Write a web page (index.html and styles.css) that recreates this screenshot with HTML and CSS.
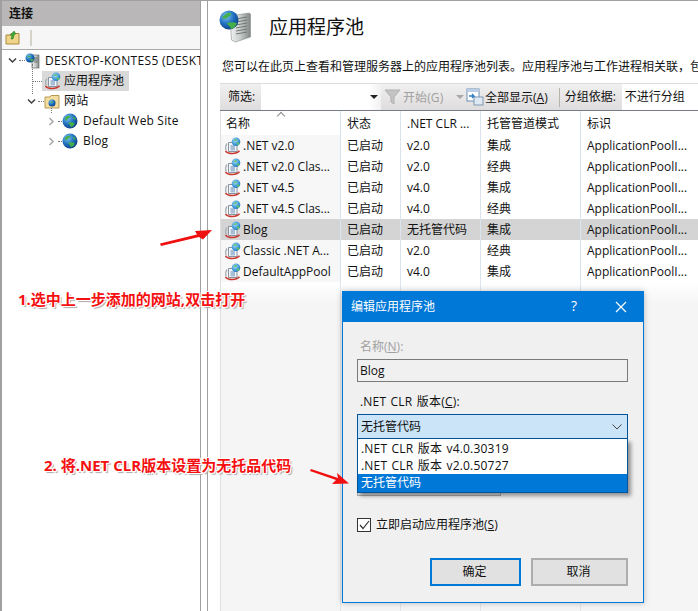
FILE: index.html
```html
<!DOCTYPE html>
<html lang="zh-CN">
<head>
<meta charset="utf-8">
<title>应用程序池</title>
<link rel="stylesheet" href="styles.css">
</head>
<body>
<svg class="defs" width="0" height="0" aria-hidden="true">
  <defs>
    <radialGradient id="globe" cx="35%" cy="30%" r="75%">
      <stop offset="0" stop-color="#7fc4ee"/>
      <stop offset=".55" stop-color="#1f6fc0"/>
      <stop offset="1" stop-color="#0d3f80"/>
    </radialGradient>
    <radialGradient id="globe-light" cx="40%" cy="35%" r="75%">
      <stop offset="0" stop-color="#a8dcf5"/>
      <stop offset=".6" stop-color="#3d97d8"/>
      <stop offset="1" stop-color="#1f6fb5"/>
    </radialGradient>
    <linearGradient id="tower" x1="0" x2="1" y1="0" y2="0">
      <stop offset="0" stop-color="#f2f4f3"/>
      <stop offset=".5" stop-color="#c9cdcb"/>
      <stop offset="1" stop-color="#7f8683"/>
    </linearGradient>
    <symbol id="i-globe" viewBox="0 0 16 16">
      <circle cx="8" cy="8" r="7.5" fill="url(#globe)"/>
      <path d="M3 5c1.500-2 3.500-2.500 5-2 1 .5 0 1.500-1 2-.5 1-2 1-2.500 2.500C3.500 8 3 6.500 3 5zM7 9.500c1.500-.5 4-.5 5.500.5.500 1-1 3.500-3 4-1.500 0-1-2-2-2.500S6 10 7 9.500zM11 3.500c1 0 2.500 1.500 3 3-1 .5-2.500-.5-3-1.500z" fill="#45b04a"/>
    </symbol>
    <symbol id="i-pool" viewBox="0 0 18 18">
      <path d="M3 6.500C1.500 8.500 1.300 11 2 13.500" fill="none" stroke="#a9b0b8" stroke-width="1.300"/>
      <path d="M4.500 5.500h8.500v9H4.500z" fill="#f4f6f8" stroke="#8793a0"/>
      <path d="M6.500 8.500h4.500v1H6.500zM6.500 10.500h4.500v1H6.500zM6.500 12.500h4.500v.8H6.500z" fill="#5a86b4"/>
      <circle cx="12" cy="4.800" r="4.300" fill="url(#globe-light)"/>
      <path d="M9.500 3.500c1-1.300 2.500-1.500 3.500-1 0 1-2 2-3.500 1zM12.500 5.500c.8 0 2.500 0 3 .4 0 1-1 2.200-2 2.200z" fill="#5fc062"/>
      <path d="M1.500 14c2.500 3.400 11 3.400 14 -.2" fill="none" stroke="#c8392f" stroke-width="1.500"/>
    </symbol>
  </defs>
</svg>

<div class="window">
  <aside class="conn">
    <div class="conn-head">连接</div>
    <div class="conn-tools">
      <svg class="tool-icon" width="15" height="15" viewBox="0 0 15 15">
        <path d="M1 5h4l1-1.500h8v10.500H1z" fill="#f0d48a" stroke="#a98b3e"/>
        <path d="M6 9l1-4-2 .5L9 1l2 3-1.500 0L8 9z" fill="#3fa535" stroke="#2d7d27" stroke-width=".5"/>
      </svg>
      <span class="tool-sep"></span>
    </div>
    <ul class="tree">
      <li class="node lvl0">
        <svg class="chev" viewBox="0 0 9 9"><path d="M1 2.500l3.500 3.500L8 2.500" /></svg>
        <span class="dots short"></span>
        <svg class="node-icon" width="16" height="16" viewBox="0 0 16 16">
          <rect x="7" y="2" width="7" height="13" fill="url(#tower)" stroke="#67706c" stroke-width=".7"/>
          <path d="M8.500 5h4M8.500 7h4M8.500 9h4" stroke="#4c5753" stroke-width=".8"/>
          <circle cx="5" cy="5" r="4.500" fill="url(#globe)"/>
          <path d="M2.500 3.500c1-1 3-1.500 3.500-.5 0 1-2 2-3.500.5zM5 6c1 0 3 0 3.500.5 0 1-1.500 2-2.500 2z" fill="#45b04a"/>
        </svg>
        <span class="node-label server">DESKTOP-KONTES5 (DESKTOP-KONTES5\Administrator)</span>
      </li>
      <li class="node lvl1">
        <span class="dots long"></span>
        <span class="sel">
          <svg class="node-icon" width="18" height="18"><use href="#i-pool"/></svg>
          <span class="node-label">应用程序池</span>
        </span>
      </li>
      <li class="node lvl1b">
        <svg class="chev" viewBox="0 0 9 9"><path d="M1 2.500l3.500 3.500L8 2.500" /></svg>
        <span class="dots short"></span>
        <svg class="node-icon" width="16" height="15" viewBox="0 0 16 15">
          <path d="M1 3h5l1-1.500h8V14H1z" fill="#f3dc9f" stroke="#b99a52"/>
          <circle cx="8" cy="9" r="3.500" fill="url(#globe)"/>
          <path d="M6 8c1-1 2.500-1 3 0-1 1-2 1-3 0z" fill="#45b04a"/>
        </svg>
        <span class="node-label">网站</span>
      </li>
      <li class="node lvl2 first">
        <svg class="chev closed" viewBox="0 0 9 9"><path d="M2.500 1L6 4.500 2.500 8" /></svg>
        <span class="dots short"></span>
        <svg class="node-icon" width="16" height="16"><use href="#i-globe"/></svg>
        <span class="node-label">Default Web Site</span>
      </li>
      <li class="node lvl2">
        <svg class="chev closed" viewBox="0 0 9 9"><path d="M2.500 1L6 4.500 2.500 8" /></svg>
        <span class="dots short"></span>
        <svg class="node-icon" width="16" height="16"><use href="#i-globe"/></svg>
        <span class="node-label">Blog</span>
      </li>
    </ul>
  </aside>

  <main class="main">
    <header class="page-head">
      <svg class="head-icon" width="33" height="33" viewBox="0 0 33 33">
        <path d="M11 6l19-3 1.500 1v23l-15 5-4-2z" fill="url(#tower)" stroke="#8a908d" stroke-width=".6"/>
        <path d="M17 9l11-2M17 12l11-2M17 15l11-2M17 18l11-2M17 21l11-2M17 24l11-2" stroke="#6f7774" stroke-width="1"/>
        <circle cx="10" cy="10" r="9.500" fill="url(#globe)"/>
        <path d="M3 8c2-4 7-6 9-5 1 1-1 3-3 4-1 2-4 2-6 1zM8 13c3-1 7-1 10 0-1 3-4 6-6 6-1-2-1-3-3-4z" fill="#45b04a"/>
      </svg>
      <h1>应用程序池</h1>
    </header>
    <p class="desc">您可以在此页上查看和管理服务器上的应用程序池列表。应用程序池与工作进程相关联，包含一个或多个应用程序。</p>
    <div class="filter">
      <span class="filter-label">筛选:</span>
      <span class="filter-input"><span class="caret"></span></span>
      <span class="fbtn disabled">
        <svg width="18" height="16" viewBox="0 0 18 16"><path d="M1 1h15l-6 7v7l-3-2V8z" fill="#c4c4c4" stroke="#b0b0b0"/></svg>
        <span>开始(G)</span>
      </span>
      <span class="caret small"></span>
      <span class="fbtn">
        <svg width="18" height="18" viewBox="0 0 18 18"><rect x="1" y="1" width="12" height="12" fill="#fff" stroke="#6d8fb3"/><rect x="1" y="1" width="12" height="3" fill="#b8cfe6"/><rect x="8" y="9" width="9" height="8" fill="#dfe9f3" stroke="#7f98b3"/><path d="M3 8h5l-2-2M8 8l-2 2" fill="none" stroke="#2f7fc1" stroke-width="1.300"/></svg>
        <span>全部显示(<u>A</u>)</span>
      </span>
      <span class="filter-sep"></span>
      <span class="group-label">分组依据:</span>
      <span class="group-value">不进行分组</span>
    </div>
    <div class="list">
      <div class="row head">
        <span class="c1">名称<i class="sort"></i></span><span class="c2">状态</span><span class="c3">.NET CLR ...</span><span class="c4">托管管道模式</span><span class="c5">标识</span>
      </div>
      <div class="row"><span class="c1"><svg width="18" height="18"><use href="#i-pool"/></svg>.NET v2.0</span><span class="c2">已启动</span><span class="c3">v2.0</span><span class="c4">集成</span><span class="c5">ApplicationPoolI...</span></div>
      <div class="row"><span class="c1"><svg width="18" height="18"><use href="#i-pool"/></svg>.NET v2.0 Clas...</span><span class="c2">已启动</span><span class="c3">v2.0</span><span class="c4">经典</span><span class="c5">ApplicationPoolI...</span></div>
      <div class="row"><span class="c1"><svg width="18" height="18"><use href="#i-pool"/></svg>.NET v4.5</span><span class="c2">已启动</span><span class="c3">v4.0</span><span class="c4">集成</span><span class="c5">ApplicationPoolI...</span></div>
      <div class="row"><span class="c1"><svg width="18" height="18"><use href="#i-pool"/></svg>.NET v4.5 Clas...</span><span class="c2">已启动</span><span class="c3">v4.0</span><span class="c4">经典</span><span class="c5">ApplicationPoolI...</span></div>
      <div class="row selected"><span class="c1"><svg width="18" height="18"><use href="#i-pool"/></svg>Blog</span><span class="c2">已启动</span><span class="c3">无托管代码</span><span class="c4">集成</span><span class="c5">ApplicationPoolI...</span></div>
      <div class="row"><span class="c1"><svg width="18" height="18"><use href="#i-pool"/></svg>Classic .NET A...</span><span class="c2">已启动</span><span class="c3">v2.0</span><span class="c4">经典</span><span class="c5">ApplicationPoolI...</span></div>
      <div class="row"><span class="c1"><svg width="18" height="18"><use href="#i-pool"/></svg>DefaultAppPool</span><span class="c2">已启动</span><span class="c3">v4.0</span><span class="c4">集成</span><span class="c5">ApplicationPoolI...</span></div>
      <div class="list-rest">
        <span class="c1"></span><span class="c2"></span><span class="c3"></span><span class="c4"></span><span class="c5"></span>
      </div>
    </div>
  </main>
</div>

<section class="dialog">
  <div class="dlg-title">
    <span class="dlg-caption">编辑应用程序池</span>
    <span class="dlg-help">?</span>
    <svg class="dlg-close" width="12" height="12" viewBox="0 0 12 12"><path d="M1 1l10 10M11 1L1 11"/></svg>
  </div>
  <div class="dlg-body">
    <div class="lbl muted">名称(<u>N</u>):</div>
    <div class="readonly">Blog</div>
    <div class="lbl clr">.NET CLR 版本(<u>C</u>):</div>
    <div class="combo"><span>无托管代码</span><svg width="10" height="6" viewBox="0 0 10 6"><path d="M.5.5L5 5 9.500.500"/></svg></div>
    <div class="dropwrap">
      <div class="ghost"></div>
      <ul class="drop">
        <li>.NET CLR 版本 v4.0.30319</li>
        <li>.NET CLR 版本 v2.0.50727</li>
        <li class="on">无托管代码</li>
      </ul>
    </div>
    <label class="check">
      <span class="box"><svg width="11" height="10" viewBox="0 0 11 10"><path d="M1 5l3 3.500L10 1"/></svg></span>
      <span>立即启动应用程序池(<u>S</u>)</span>
    </label>
    <div class="btns">
      <span class="btn primary">确定</span>
      <span class="btn">取消</span>
    </div>
  </div>
</section>

<div class="note n1">1.选中上一步添加的网站,双击打开</div>
<div class="note n2">2. 将.NET CLR版本设置为无托品代码</div>
<svg class="arrow a1" width="56" height="24" viewBox="0 0 56 24"><path d="M1 16.500L38 7.500 36 4 53 3 44 12.500 40 10 2 19z" fill="#f01010"/></svg>
<svg class="arrow a2" width="44" height="20" viewBox="0 0 44 20"><path d="M2 0L29 9 28 4 40 14.500 23 15 27 11 1 2z" fill="#f01010"/></svg>
</body>
</html>
```

FILE: styles.css
```css
* { box-sizing: border-box; }
html, body { margin: 0; padding: 0; }
body {
  width: 698px;
  height: 611px;
  overflow: hidden;
  position: relative;
  background: #fff;
  color: #111;
  font: 12px/16px "Open Sans", "Noto Sans CJK SC", sans-serif;
}
.defs { position: absolute; }
ul { list-style: none; margin: 0; padding: 0; }
.window { display: flex; height: 611px; border-top: 1px solid #a0a0a0; }

/* connections pane */
.conn {
  width: 201px;
  flex: none;
  border-left: 2px solid #a0a0a0;
  border-right: 1px solid #a0a0a0;
  overflow: hidden;
}
.conn-head {
  height: 25px;
  padding-left: 7px;
  background: #b9b7b8;
  font-size: 12px;
  font-weight: 600;
  line-height: 25px;
}
.conn-tools {
  height: 24px;
  display: flex;
  align-items: center;
  gap: 10px;
  padding-left: 3px;
  background: #f6f6f6;
  border-bottom: 1px solid #a9a9a9;
}
.tool-sep { width: 2px; height: 16px; background: #d5d3c8; }
.node { height: 20px; display: flex; align-items: center; white-space: nowrap; position: relative; }
.lvl0 { padding-left: 6px; height: 21px; }
.lvl1 { padding-left: 31px; height: 20px; }
.lvl1b { padding-left: 25px; }
.lvl2 { padding-left: 45px; }
.chev { width: 9px; height: 9px; flex: none; }
.chev path { fill: none; stroke: #404040; stroke-width: 1.5; }
.chev.closed path { stroke: #a6a6a6; }
.dots { display: block; height: 1px; border-top: 1px dotted #777; flex: none; }
.short { width: 6px; margin-left: 2px; }
.lvl2 .short { width: 4px; }
.long { width: 9px; }
.node-icon { flex: none; margin-right: 4px; }
.lvl2 .node-icon { margin-right: 5px; }
.node-label { letter-spacing: .18px; }
.node-label.server { letter-spacing: .32px; }
.lvl1::before {
  content: "";
  position: absolute;
  left: 30px;
  top: -7px;
  height: 30px;
  border-left: 1px dotted #777;
}
.first::before {
  content: "";
  position: absolute;
  left: 49px;
  top: -3px;
  height: 5px;
  border-left: 1px dotted #777;
}
.sel { display: flex; align-items: center; height: 20px; width: 87px; padding-left: 2px; background: #d9d9d9; }
.sel .node-icon { margin-right: 2px; }
.sel .node-label { letter-spacing: 0; }

/* main pane */
.main {
  margin-left: 6px;
  flex: 1;
  min-width: 0;
  border-left: 1px solid #a0a0a0;
  overflow: hidden;
  background: #fff;
}
.page-head { display: flex; align-items: center; gap: 17px; height: 51px; padding: 0 0 0 11px; }
.page-head h1 { margin: 0; font-size: 19px; font-weight: 400; line-height: 50px; }
.desc {
  margin: 0;
  height: 31px;
  padding: 7px 0 0 14px;
  line-height: 16px;
  white-space: nowrap;
  overflow: hidden;
  font-size: 12px;
}
.filter {
  margin-left: 12px;
  height: 28px;
  display: flex;
  align-items: stretch;
  background: linear-gradient(#f1f0f0, #dedcdc);
  border-top: 1px solid #dcdcdc;
  border-bottom: 1px solid #767b85;
  line-height: 25px;
  white-space: nowrap;
}
.filter-label { width: 41px; padding-left: 8px; flex: none; }
.filter-input { width: 120px; flex: none; background: linear-gradient(90deg, #fff 90%, #f1f1f1); position: relative; }
.caret { position: absolute; right: 3px; top: 11px; border: 4px solid transparent; border-top-color: #222; border-bottom-width: 0; }
.fbtn { display: flex; align-items: center; gap: 1px; flex: none; }
.fbtn.disabled { color: #a0a0a0; margin-left: 3px; width: 71px; letter-spacing: .1px; }
.caret.small { position: static; align-self: center; margin: 0 2px 0 1px; border-top-color: #a9a9a9; }
.filter-sep { width: 1px; margin: 4px 5px 3px 11px; background: #b6b4a8; flex: none; }
.group-label { width: 57px; flex: none; }
.group-value { flex: 1; background: #fff; padding-left: 3px; }

.list { margin-left: 12px; border-left: 1px solid #dde0e4; }
.row, .list-rest { display: flex; }
.row { height: 21px; line-height: 21px; background: #fff; white-space: nowrap; }
.row.head { height: 24px; line-height: 25px; background: #fff; }
.row span { padding-left: 6px; border-right: 1px solid #dbe3ec; flex: none; height: 100%; }
.row .c1 { padding-left: 3px; background: #f7f7f7; display: flex; align-items: center; gap: 1px; position: relative; }
.row.head .c1 { padding-left: 5px; background: #fff; }
.row svg { flex: none; }
.c1 { width: 120px; }
.c2 { width: 60px; }
.c3 { width: 80px; }
.c4 { width: 100px; }
.c5 { width: 120px; }
.row.selected { background: #d4d4d4; }
.row.selected .c1 { background: #d4d4d4; }
.sort {
  position: absolute;
  left: 57px;
  top: 2px;
  width: 6px;
  height: 6px;
  border-left: 1px solid #8a8a8a;
  border-top: 1px solid #8a8a8a;
  transform: rotate(45deg);
}
.list-rest { height: 340px; background: linear-gradient(#fff, #f5f5f5 22px); }
.list-rest span { flex: none; border-right: 1px solid #e2e7ec; height: 100%; }

/* dialog */
.dialog {
  position: absolute;
  left: 342px;
  top: 291px;
  width: 302px;
  height: 312px;
  border: 1px solid #0078d7;
  background: #f0f0f0;
  box-shadow: 0 0 6px rgba(0, 0, 0, .25);
}
.dlg-title { height: 30px; display: flex; align-items: center; background: #0078d7; color: #fff; padding-left: 8px; position: relative; }
.dlg-caption { flex: 1; }
.dlg-help { position: absolute; left: 228px; top: 6px; font-size: 14px; }
.dlg-close { position: absolute; left: 272px; top: 9px; }
.dlg-close path { stroke: #fff; stroke-width: 1.2; fill: none; }
.dlg-body { padding: 17px 15px 0 14px; }
.lbl { height: 16px; padding-left: 3px; }
.lbl.muted { color: #a0a0a0; }
.readonly { margin-top: 4px; height: 23px; border: 1px solid #7a7a7a; padding-left: 2px; line-height: 21px; }
.clr { margin-top: 12px; letter-spacing: .2px; word-spacing: 1px; }
.combo {
  margin-top: 4px;
  height: 25px;
  border: 1px solid #005499;
  background: #cce4f7;
  padding-left: 3px;
  line-height: 23px;
  display: flex;
  justify-content: space-between;
  align-items: center;
}
.combo svg { margin-right: 5px; }
.combo path { fill: none; stroke: #444; stroke-width: 1; }
.dropwrap { position: relative; height: 78px; }
.ghost { position: absolute; left: 0; top: 40px; width: 144px; height: 17px; border: 1px solid #adadad; background: #e1e1e1; }
.drop {
  position: absolute;
  left: 0;
  right: 0;
  top: 0;
  padding-top: 1px;
  background: #fff;
  border: 1px solid #005499;
  border-top: 0;
  box-shadow: 3px 3px 4px rgba(0, 0, 0, .4);
}
.drop li { height: 17px; line-height: 17px; padding-left: 3px; letter-spacing: .2px; word-spacing: 1px; }
.drop li.on { height: 18px; line-height: 17px; background: #0078d7; color: #fff; letter-spacing: 0; }
.check { display: flex; align-items: center; height: 16px; gap: 5px; }
.box { width: 14px; height: 14px; border: 1px solid #333; background: #fff; display: flex; align-items: center; justify-content: center; }
.box path { fill: none; stroke: #333; stroke-width: 1.2; }
.btns { display: flex; gap: 10px; margin-top: 25px; padding-left: 73px; }
.btn { width: 97px; height: 28px; border: 2px solid #adadad; background: #e1e1e1; text-align: center; line-height: 24px; padding-right: 2px; }
.btn.primary { width: 91px; border-color: #0078d7; }

/* annotations */
.note {
  position: absolute;
  color: #f41010;
  font-weight: 700;
  font-size: 15px;
  line-height: 20px;
  white-space: nowrap;
  text-shadow: 1px 1px 0 #fff, -1px -1px 0 #fff, 1px -1px 0 #fff, -1px 1px 0 #fff, 2px 2px 1px #aaa;
}
.n1 { left: 18px; top: 289px; }
.n2 { left: 44px; top: 455px; }
.arrow { position: absolute; }
.a1 { left: 159px; top: 227px; }
.a2 { left: 309px; top: 469px; }
```
